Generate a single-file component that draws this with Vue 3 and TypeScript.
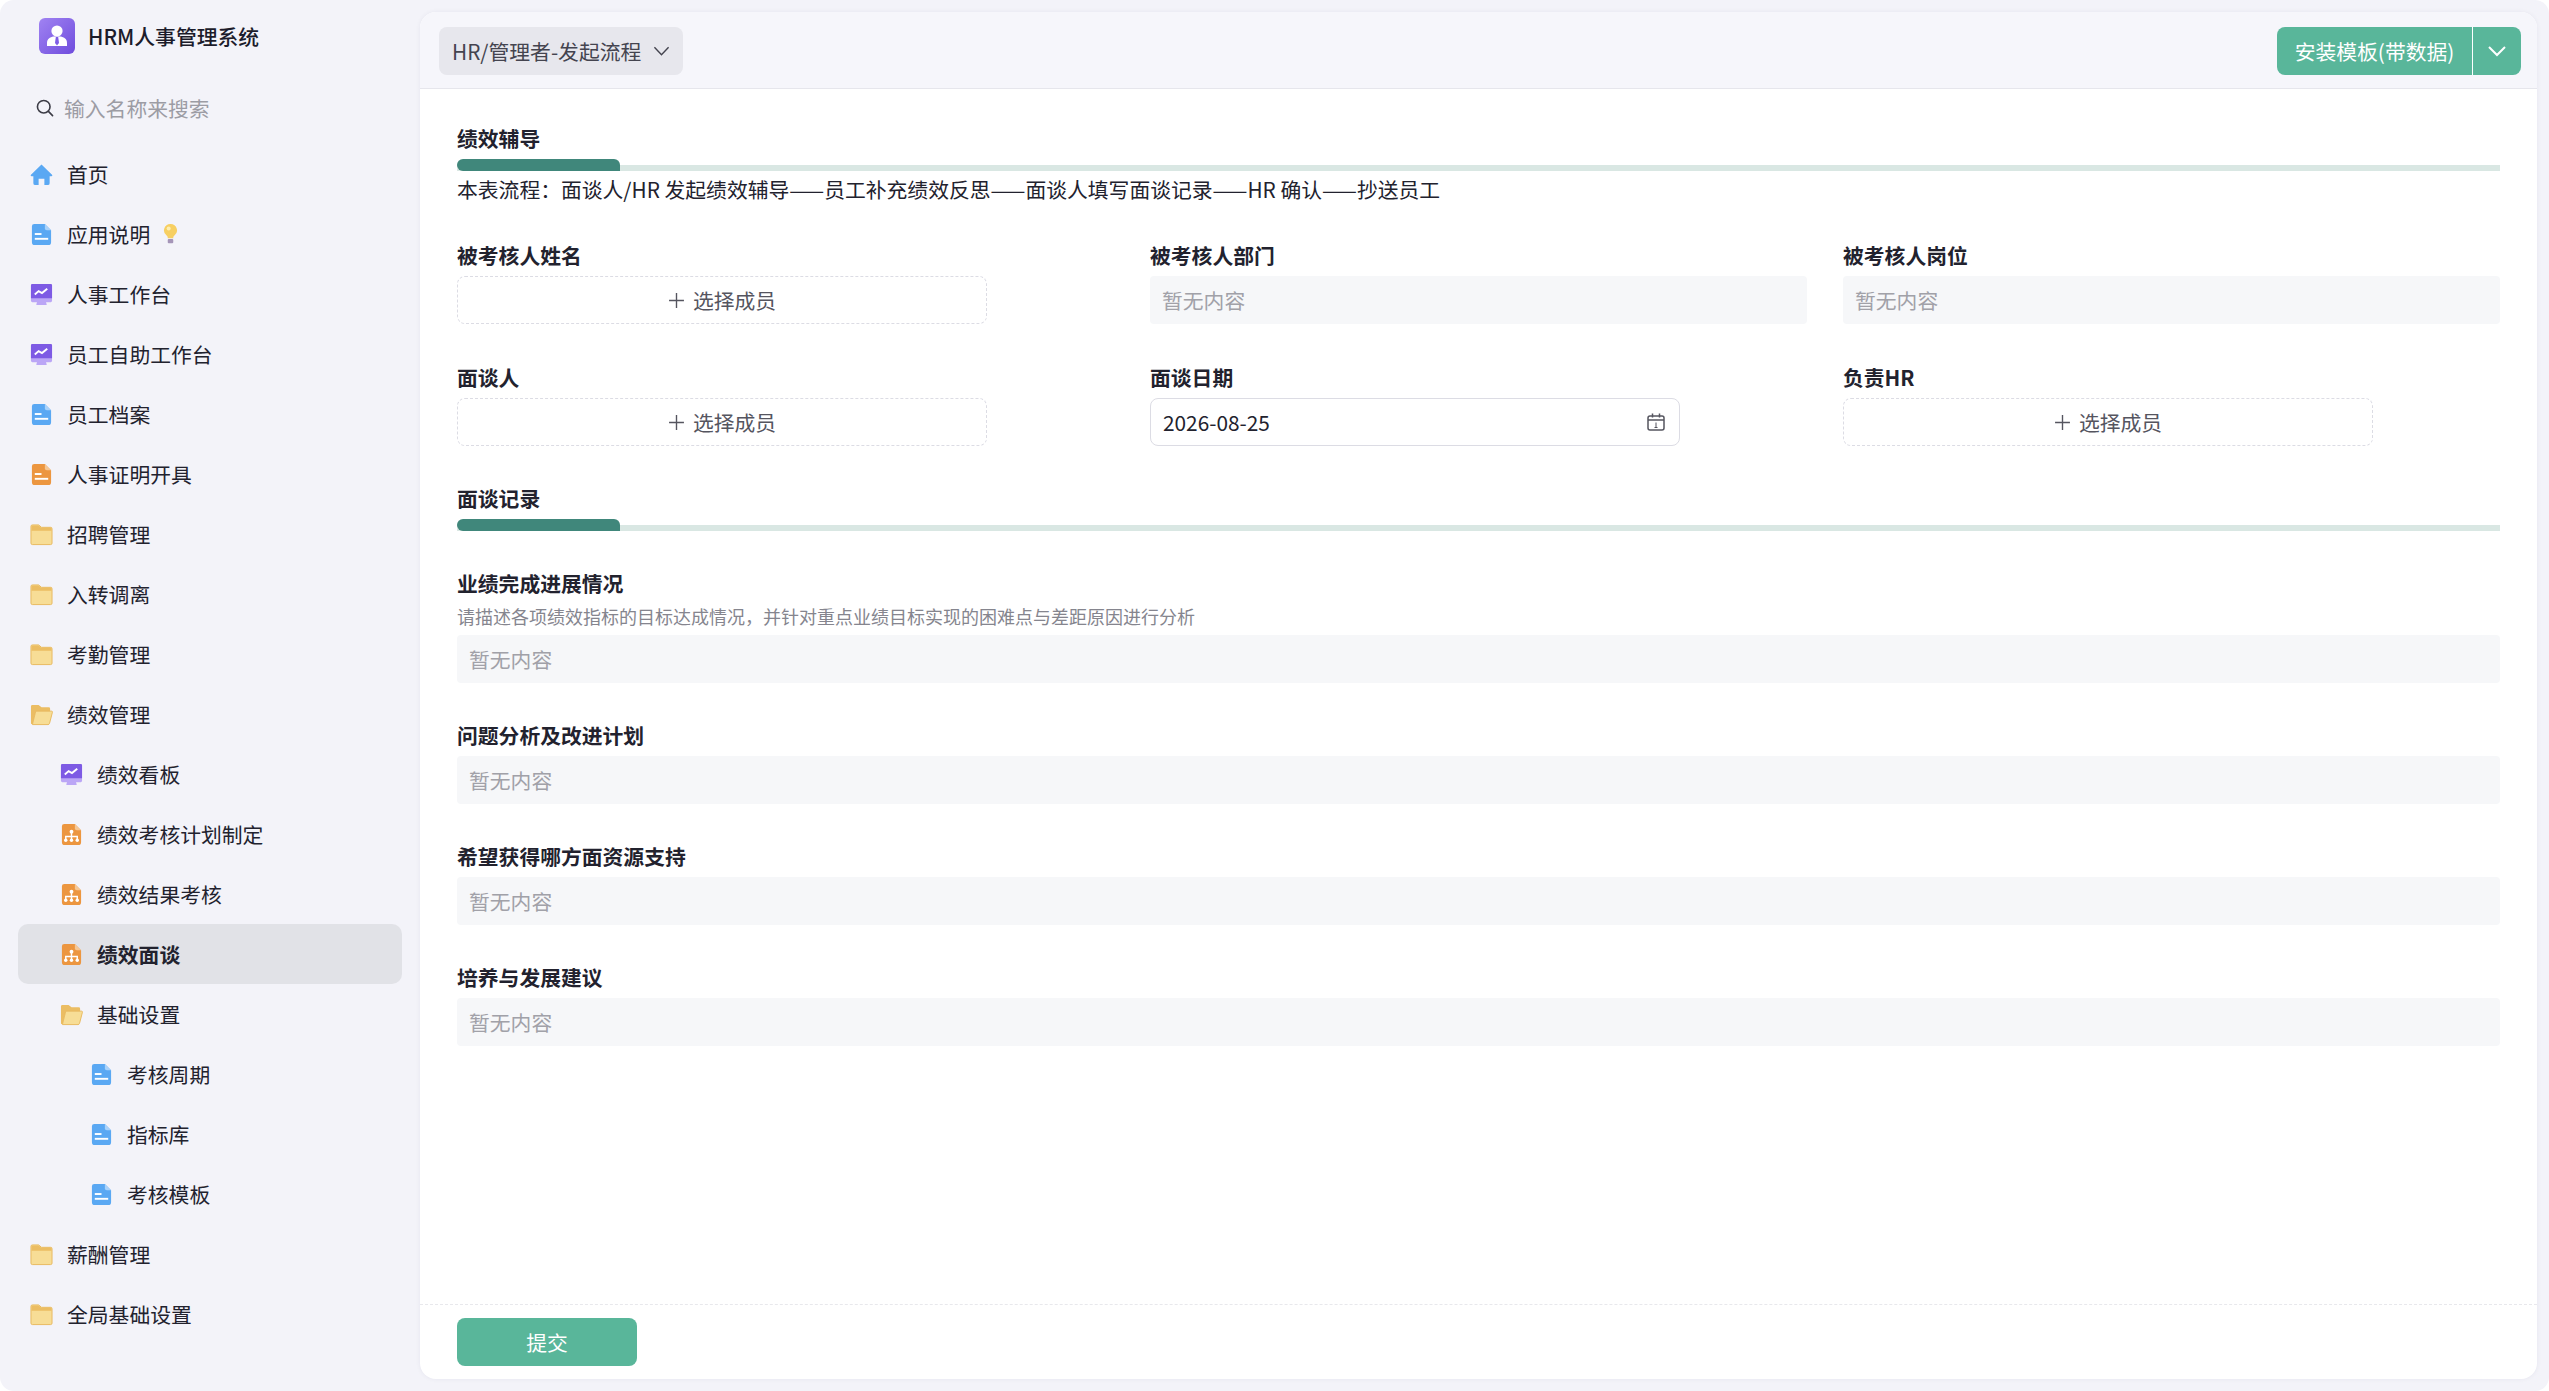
<template>
  <div class="window">
    <aside class="sidebar">
      <div class="brand">
        <svg class="brand-logo" viewBox="0 0 36 36">
          <defs>
            <linearGradient id="logoFill" x1="0" y1="0" x2="1" y2="1">
              <stop offset="0" stop-color="#a083f2" />
              <stop offset="1" stop-color="#6f4cdd" />
            </linearGradient>
          </defs>
          <rect width="36" height="36" rx="6" fill="url(#logoFill)" />
          <circle cx="18" cy="13" r="5.6" fill="#fff" />
          <path d="M8 28v-3c0-4 3-6 6.5-6.5h7C25 19 28 21 28 25v3z" fill="#fff" />
          <path d="M16.8 19h2.4l.8 6-2 2.4-2-2.4z" fill="#7f5de6" />
        </svg>
        <span class="brand-name">HRM人事管理系统</span>
      </div>
      <div class="search">
        <svg viewBox="0 0 20 20" class="search-icon">
          <circle cx="8.6" cy="8.6" r="7" fill="none" stroke="#3c3c46" stroke-width="1.8" />
          <path d="M13.8 13.8l4.6 4.6" stroke="#3c3c46" stroke-width="1.8" stroke-linecap="round" />
        </svg>
        <span>输入名称来搜索</span>
      </div>
      <nav class="menu">
        <div
          v-for="item in menu"
          :key="item.name"
          class="menu-row"
          :class="{ active: item.active }"
          :style="{ paddingLeft: 12 + item.level * 30 + 'px' }"
        >
          <svg class="menu-icon" viewBox="0 0 24 24">
            <template v-if="item.icon === 'home'">
              <path d="M12 1.5 1 12.2c-.6.6-.2 1.5.6 1.5H3.500V21a2 2 0 0 0 2 2h3.500v-6.500h6V23h3.500a2 2 0 0 0 2-2v-7.300h1.900c.8 0 1.200-.9.600-1.500z" fill="#5aa8f3" />
            </template>
            <template v-else-if="item.icon === 'doc'">
              <path d="M4.500 1h11L22 7.500V20a3 3 0 0 1-3 3H5a3 3 0 0 1-3-3V3.500A2.500 2.500 0 0 1 4.500 1z" fill="#5aa8f3" />
              <path d="M15.500 1 22 7.500h-4.500a2 2 0 0 1-2-2z" fill="#a9d2fa" />
              <rect x="5" y="10.500" width="7" height="2" fill="#fff" />
              <rect x="5" y="15.500" width="14" height="2" fill="#fff" />
            </template>
            <template v-else-if="item.icon === 'cert'">
              <path d="M4.500 1h11L22 7.500V20a3 3 0 0 1-3 3H5a3 3 0 0 1-3-3V3.500A2.500 2.500 0 0 1 4.500 1z" fill="#ec9640" />
              <path d="M15.500 1 22 7.500h-4.500a2 2 0 0 1-2-2z" fill="#f6c794" />
              <rect x="5" y="10.500" width="7" height="2" fill="#fff" />
              <rect x="5" y="15.500" width="14" height="2" fill="#fff" />
            </template>
            <template v-else-if="item.icon === 'org'">
              <path d="M4.500 1h11L22 7.500V20a3 3 0 0 1-3 3H5a3 3 0 0 1-3-3V3.500A2.500 2.500 0 0 1 4.500 1z" fill="#ec9640" />
              <path d="M15.500 1 22 7.500h-4.500a2 2 0 0 1-2-2z" fill="#f6c794" />
              <circle cx="12" cy="9" r="2" fill="#fff" />
              <path d="M12 10v4M6 17v-3h12v3M12 14v3" stroke="#fff" stroke-width="1.500" fill="none" />
              <circle cx="6" cy="18" r="1.800" fill="#fff" />
              <circle cx="12" cy="18" r="1.800" fill="#fff" />
              <circle cx="18" cy="18" r="1.800" fill="#fff" />
            </template>
            <template v-else-if="item.icon === 'screen'">
              <path d="M7.500 19h9l1 4h-11z" fill="#bba6f6" />
              <rect x="1" y="1" width="22" height="19" rx="1.500" fill="#bba6f6" />
              <path d="M2.500 1h19A1.500 1.500 0 0 1 23 2.500V16H1V2.500A1.500 1.500 0 0 1 2.500 1z" fill="#7d5ae4" />
              <path d="M5 12l4-3.500 3.500 2L18 6" fill="none" stroke="#fff" stroke-width="2" />
            </template>
            <template v-else-if="item.icon === 'folder'">
              <path d="M1 3.500A1.500 1.500 0 0 1 2.500 2h6.500l3 2.500h9.500A1.500 1.500 0 0 1 23 6v15a1.500 1.500 0 0 1-1.500 1.500h-19A1.500 1.500 0 0 1 1 21z" fill="#f7dd96" stroke="#e8b95e" stroke-width="1" />
              <path d="M1.500 3.500a1 1 0 0 1 1-1h6.300l3 2.500h9.700a1 1 0 0 1 1 1v2H1.500z" fill="#ebbd63" />
            </template>
            <template v-else-if="item.icon === 'folderOpen'">
              <path d="M1 3.500A1.500 1.500 0 0 1 2.500 2h6.500l3 2.500h7.500A1.500 1.500 0 0 1 21 6v3H6L3 22H2a1 1 0 0 1-1-1z" fill="#ebbd63" />
              <path d="M6 8.500h16.500c.7 0 1.100.6.900 1.200l-3 11.500a1.700 1.700 0 0 1-1.600 1.300H2.500z" fill="#f7dd96" stroke="#e8b95e" stroke-width="1" />
            </template>
          </svg>
          <span class="menu-text">{{ item.name }}</span>
          <svg v-if="item.bulb" class="bulb" viewBox="0 0 16 24">
            <path d="M8 1a7 7 0 0 0-4 12.800c.8.700 1 1.500 1 2.700h6c0-1.200.2-2 1-2.700A7 7 0 0 0 8 1z" fill="#f7cf62" />
            <circle cx="6" cy="6" r="2.200" fill="#fdeeb2" />
            <rect x="5" y="17.500" width="6" height="4.500" rx="1" fill="#a595b8" />
          </svg>
        </div>
      </nav>
    </aside>

    <main class="card">
      <header class="card-head">
        <div class="role-select">
          <span>HR/管理者-发起流程</span>
          <svg viewBox="0 0 18 12" class="role-arrow">
            <path d="M1.500 2 9 10l7.500-8" fill="none" stroke="#44444f" stroke-width="1.500" />
          </svg>
        </div>
        <div class="install">
          <span class="install-main">安装模板(带数据)</span>
          <span class="install-more">
            <svg viewBox="0 0 18 12" class="install-arrow">
              <path d="M1 2l8 8 8-8" fill="none" stroke="#fff" stroke-width="2" />
            </svg>
          </span>
        </div>
      </header>

      <div class="form-body">
        <div class="section-title">绩效辅导</div>
        <div class="section-bar"><i></i></div>
        <p class="flow-note">本表流程：面谈人/HR 发起绩效辅导——员工补充绩效反思——面谈人填写面谈记录——HR 确认——抄送员工</p>

        <div class="info-grid">
          <div v-for="f in topFields" :key="f.label" class="field">
            <div class="field-label">{{ f.label }}</div>
            <div v-if="f.type === 'member'" class="member-pick">
              <svg viewBox="0 0 16 16" class="plus"><path d="M8 1v14M1 8h14" stroke="#55555f" stroke-width="1.300" /></svg>
              <span>选择成员</span>
            </div>
            <div v-else-if="f.type === 'date'" class="date-input">
              <span>2026-08-25</span>
              <svg viewBox="0 0 18 18" class="calendar">
                <rect x="1" y="3" width="16" height="14" rx="2" fill="none" stroke="#55555f" stroke-width="1.500" />
                <path d="M1 7h16M5.500 0.500v4M12.500 0.500v4" stroke="#55555f" stroke-width="1.500" />
                <path d="M9 9.500v5M7.500 14.500h3" stroke="#55555f" stroke-width="1" />
              </svg>
            </div>
            <div v-else class="readonly">暂无内容</div>
          </div>
        </div>

        <div class="section-title second">面谈记录</div>
        <div class="section-bar"><i></i></div>

        <div v-for="r in records" :key="r.label" class="record">
          <div class="field-label">{{ r.label }}</div>
          <div v-if="r.hint" class="hint">{{ r.hint }}</div>
          <div class="readonly">暂无内容</div>
        </div>
      </div>

      <footer class="card-foot">
        <button class="submit">提交</button>
      </footer>
    </main>
  </div>
</template>

<script setup lang="ts">
interface MenuItem {
  name: string;
  icon: string;
  level: number;
  active?: boolean;
  bulb?: boolean;
}

interface TopField {
  label: string;
  type: 'member' | 'readonly' | 'date';
}

const menu: MenuItem[] = [
  { name: '首页', icon: 'home', level: 0 },
  { name: '应用说明', icon: 'doc', level: 0, bulb: true },
  { name: '人事工作台', icon: 'screen', level: 0 },
  { name: '员工自助工作台', icon: 'screen', level: 0 },
  { name: '员工档案', icon: 'doc', level: 0 },
  { name: '人事证明开具', icon: 'cert', level: 0 },
  { name: '招聘管理', icon: 'folder', level: 0 },
  { name: '入转调离', icon: 'folder', level: 0 },
  { name: '考勤管理', icon: 'folder', level: 0 },
  { name: '绩效管理', icon: 'folderOpen', level: 0 },
  { name: '绩效看板', icon: 'screen', level: 1 },
  { name: '绩效考核计划制定', icon: 'org', level: 1 },
  { name: '绩效结果考核', icon: 'org', level: 1 },
  { name: '绩效面谈', icon: 'org', level: 1, active: true },
  { name: '基础设置', icon: 'folderOpen', level: 1 },
  { name: '考核周期', icon: 'doc', level: 2 },
  { name: '指标库', icon: 'doc', level: 2 },
  { name: '考核模板', icon: 'doc', level: 2 },
  { name: '薪酬管理', icon: 'folder', level: 0 },
  { name: '全局基础设置', icon: 'folder', level: 0 },
];

const topFields: TopField[] = [
  { label: '被考核人姓名', type: 'member' },
  { label: '被考核人部门', type: 'readonly' },
  { label: '被考核人岗位', type: 'readonly' },
  { label: '面谈人', type: 'member' },
  { label: '面谈日期', type: 'date' },
  { label: '负责HR', type: 'member' },
];

const records = [
  { label: '业绩完成进展情况', hint: '请描述各项绩效指标的目标达成情况，并针对重点业绩目标实现的困难点与差距原因进行分析' },
  { label: '问题分析及改进计划', hint: '' },
  { label: '希望获得哪方面资源支持', hint: '' },
  { label: '培养与发展建议', hint: '' },
];
</script>

<style>
html,
body {
  background: #fff;
  margin: 0;
}
</style>

<style scoped>
.window {
  width: 2549px;
  height: 1391px;
  display: flex;
  background: #f3f3f9;
  border-radius: 14px;
  overflow: hidden;
  font-family: "Noto Sans CJK SC", "Noto Sans", sans-serif;
  font-size: 20.8px;
  color: #22222e;
}

.sidebar {
  width: 420px;
  flex: none;
}

.brand {
  display: flex;
  align-items: center;
  gap: 13px;
  margin: 18px 0 0 39px;
  height: 36px;
}

.brand-logo {
  width: 36px;
  height: 36px;
}

.brand-name {
  font-weight: 500;
  line-height: 36px;
  color: #1c1c2b;
}

.search {
  display: flex;
  align-items: center;
  gap: 10px;
  height: 36px;
  margin: 36px 0 0 36px;
  color: #9c9ca4;
}

.search-icon {
  width: 18px;
  height: 18px;
}

.menu {
  margin: 18px 18px 0;
}

.menu-row {
  display: flex;
  align-items: center;
  height: 60px;
  border-radius: 10px;
}

.menu-row.active {
  background: #e1e2e7;
  font-weight: 700;
}

.menu-icon {
  width: 23px;
  height: 23px;
  margin-right: 14px;
  flex: none;
}

.menu-text {
  line-height: 28px;
}

.bulb {
  width: 15px;
  height: 22px;
  margin-left: 13px;
}

.card {
  flex: 1;
  margin: 12px 12px 12px 0;
  background: #fff;
  border-radius: 16px;
  box-shadow: 0 0 5px rgba(40, 40, 90, 0.06);
  display: flex;
  flex-direction: column;
  overflow: hidden;
}

.card-head {
  height: 76px;
  flex: none;
  display: flex;
  justify-content: space-between;
  align-items: flex-start;
  padding: 15px 16px 0 19px;
  box-sizing: border-box;
  background: #f6f6fb;
  border-bottom: 1px solid #e6e6ec;
  box-sizing: content-box;
  height: 61px;
}

.role-select {
  width: 244px;
  height: 48px;
  box-sizing: border-box;
  padding: 0 13px;
  display: flex;
  align-items: center;
  justify-content: space-between;
  background: #e7e7ed;
  border-radius: 8px;
  color: #44444f;
}

.role-arrow {
  width: 17px;
  height: 12px;
}

.install {
  display: flex;
  height: 48px;
  background: #59b69a;
  border-radius: 8px;
  color: #fff;
}

.install-main {
  width: 196px;
  text-align: center;
  line-height: 48px;
  border-right: 1px solid #fff;
  box-sizing: border-box;
}

.install-more {
  width: 48px;
  display: flex;
  align-items: center;
  justify-content: center;
}

.install-arrow {
  width: 18px;
  height: 12px;
}

.form-body {
  flex: 1;
  padding: 35px 37px 0;
}

.section-title {
  font-weight: 700;
  line-height: 28px;
}

.section-title.second {
  margin-top: 38px;
}

.section-bar {
  height: 12px;
  margin-top: 7px;
  position: relative;
  display: flex;
  align-items: flex-end;
}

.section-bar::before {
  content: "";
  width: 100%;
  height: 6px;
  background: #d9e7e3;
}

.section-bar i {
  position: absolute;
  left: 0;
  top: 0;
  width: 163px;
  height: 12px;
  background: #40877b;
  border-radius: 12px 12px 0 12px;
}

.flow-note {
  margin: 4px 0 0;
  line-height: 28px;
}

.info-grid {
  display: grid;
  grid-template-columns: repeat(3, 1fr);
  column-gap: 36px;
  row-gap: 39px;
  margin-top: 38px;
}

.field-label {
  font-weight: 700;
  line-height: 28px;
}

.member-pick {
  width: 530px;
  height: 48px;
  margin-top: 7px;
  box-sizing: border-box;
  border: 1px dashed #dcdce4;
  border-radius: 8px;
  display: flex;
  align-items: center;
  justify-content: center;
  gap: 8px;
  color: #55555f;
}

.plus {
  width: 17px;
  height: 17px;
}

.date-input {
  width: 530px;
  height: 48px;
  margin-top: 7px;
  box-sizing: border-box;
  border: 1px solid #dcdce4;
  border-radius: 8px;
  display: flex;
  align-items: center;
  justify-content: space-between;
  padding: 0 14px 0 12px;
}

.calendar {
  width: 18px;
  height: 18px;
}

.readonly {
  height: 48px;
  margin-top: 7px;
  padding-left: 12px;
  line-height: 48px;
  background: #f6f7f9;
  border-radius: 4px;
  color: #a1a1a8;
}

.record {
  margin-top: 38px;
}

.record:first-of-type {
  margin-top: 39px;
}

.hint {
  font-size: 18px;
  line-height: 24px;
  margin-top: 7px;
  color: #85858e;
}

.card-foot {
  flex: none;
  height: 75px;
  box-sizing: border-box;
  border-top: 1px dashed #e8e8ec;
  padding: 13px 37px;
}

.submit {
  display: block;
  width: 180px;
  height: 48px;
  border: none;
  border-radius: 8px;
  background: #59b69a;
  color: #fff;
  font: inherit;
}
</style>
